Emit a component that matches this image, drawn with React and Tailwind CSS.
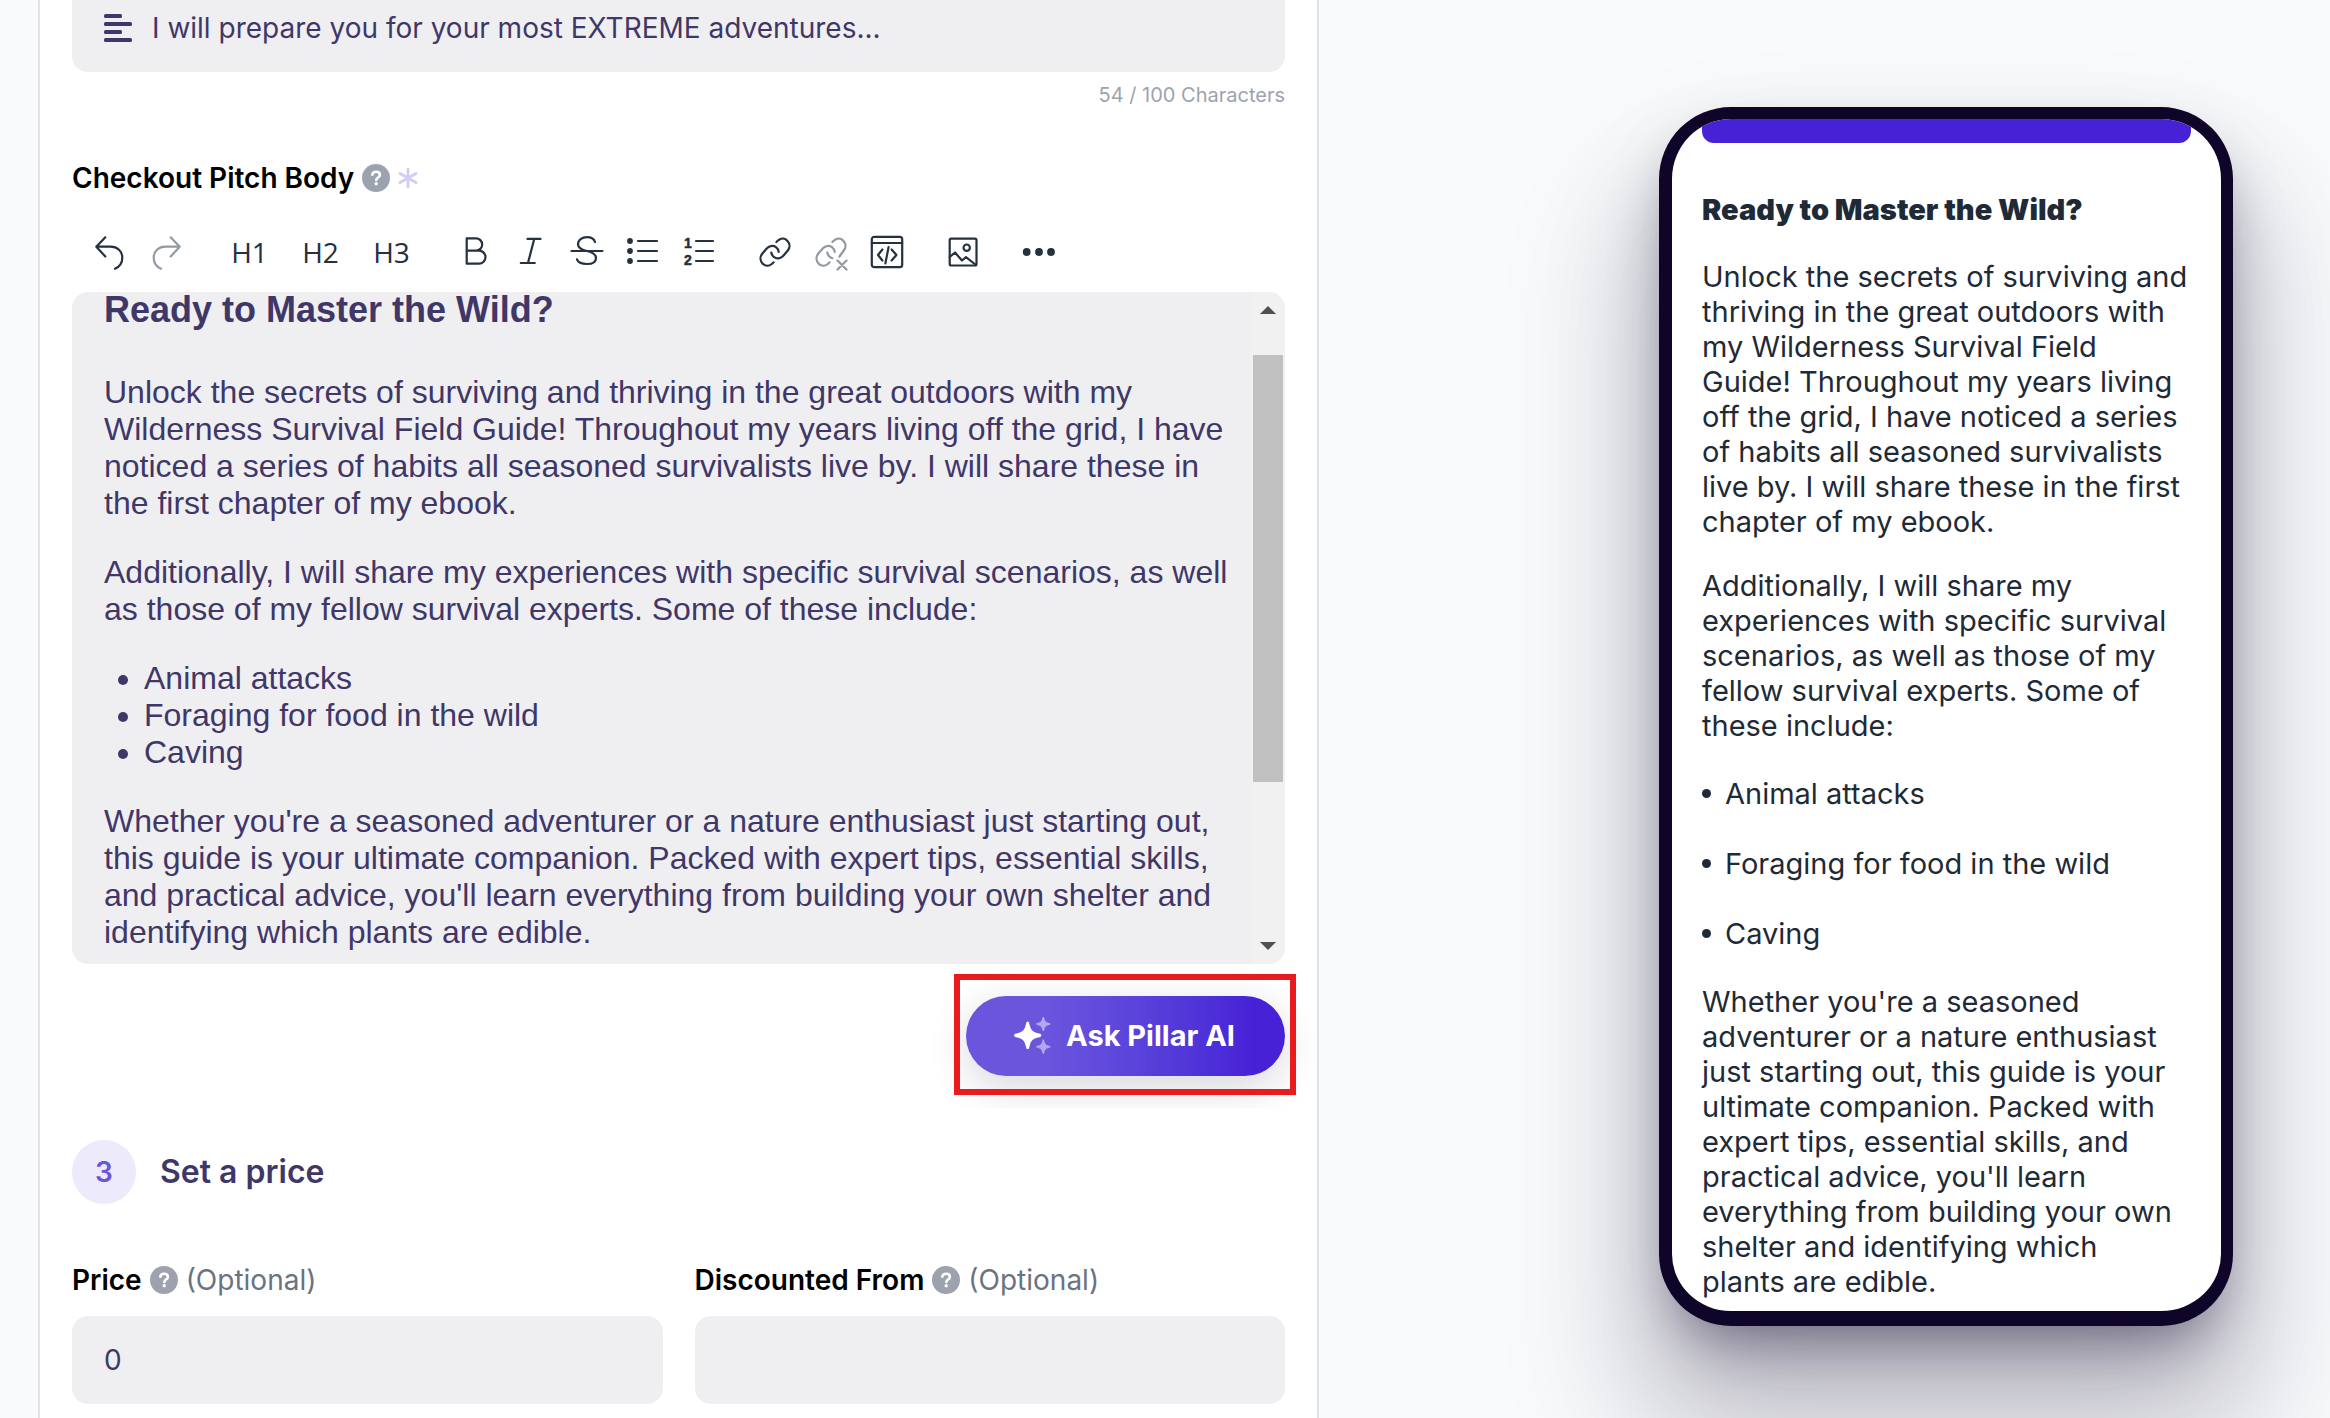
import React, { useState } from 'react';

const pitchParagraphs = [
  'Unlock the secrets of surviving and thriving in the great outdoors with my Wilderness Survival Field Guide! Throughout my years living off the grid, I have noticed a series of habits all seasoned survivalists live by. I will share these in the first chapter of my ebook.',
  'Additionally, I will share my experiences with specific survival scenarios, as well as those of my fellow survival experts. Some of these include:',
];
const pitchTopics = ['Animal attacks', 'Foraging for food in the wild', 'Caving'];
const pitchClosing =
  "Whether you're a seasoned adventurer or a nature enthusiast just starting out, this guide is your ultimate companion. Packed with expert tips, essential skills, and practical advice, you'll learn everything from building your own shelter and identifying which plants\u00a0are edible.";

const Icon = ({ children }) => (
  <svg viewBox="0 0 40 40" className="w-10 h-10" fill="none" stroke="currentColor" strokeWidth="2.2" strokeLinecap="round" strokeLinejoin="round" aria-hidden="true">
    {children}
  </svg>
);

const icons = {
  undo: <path d="M15.3 5.3 6.3 14.7l9 9.7M6.3 14.7H20.5c7 0 11.8 4.6 11.8 10.8 0 5-2.8 9.3-7.3 11.2" />,
  redo: <path d="M24.7 5.3l9 9.4-9 9.7M33.7 14.7H19.5C12.5 14.7 7.7 19.3 7.7 25.5c0 5 2.8 9.3 7.3 11.2" />,
  bold: <path d="M11.7 6.3h9.3a6.2 6.2 0 0 1 0 12.4h-9.3zM11.7 18.7h12.3a6.5 6.5 0 0 1 0 13H11.7z" />,
  italic: <path d="M16.5 6.9h13M9.8 31h14M23.2 6.9 17 31" />,
  strike: (
    <>
      <path d="M4.5 19h31" />
      <path d="M28 10c-1-3-4-4.8-8-4.8-5 0-9 2.6-9 7 0 3.5 3 5.4 9 6.8s9 3.4 9 6.9c0 4-3.6 6.1-9 6.1-5 0-9-1.4-10-4.6" />
    </>
  ),
  bullets: (
    <>
      <path d="M15 9h19M15 19h19M15 29h19" />
      <g fill="currentColor" stroke="none">
        <circle cx="7" cy="9" r="2.9" />
        <circle cx="7" cy="19" r="2.9" />
        <circle cx="7" cy="29" r="2.9" />
      </g>
    </>
  ),
  numbers: (
    <>
      <path d="M17 9h17M17 19h17M17 29h17" />
      <g fill="currentColor" stroke="currentColor" strokeWidth="0.5" fontFamily="Liberation Sans, Arial, sans-serif" fontWeight="700" fontSize="14">
        <text x="5" y="16">1</text>
        <text x="5" y="33">2</text>
      </g>
    </>
  ),
  link: (
    <path d="M16.3 20.5c.6 4 4 6.6 8 5.7 1.6-.3 2.9-1.2 4-2.4l4.5-5.3c5.2-6.6-2.8-15.6-9.6-10.2l-1.8 1.7M23.7 19.8c-.6-4-4-6.6-8-5.7-1.6.3-2.9 1.2-4 2.4l-4.5 5.3c-5.2 6.6 2.8 15.6 9.6 10.2l1.8-1.7" />
  ),
  unlink: (
    <path d="M16.3 20.5c.5 2.9 2.4 5 5 5.7M28.5 24.5l4.3-6c5.2-6.6-2.8-15.6-9.6-10.2l-1.8 1.7M23.7 19.8c-.6-4-4-6.6-8-5.7-1.6.3-2.9 1.2-4 2.4l-4.5 5.3c-5.2 6.6 2.8 15.6 9.6 10.2l1.8-1.7M26.5 28.5l9 9M35.5 28.5l-9 9" />
  ),
  code: (
    <>
      <rect x="4.8" y="4.8" width="30.4" height="30.4" rx="2.5" />
      <path d="M4.8 11h30.4M15.4 17.5 11 23l4.4 5.5M24.6 17.5 29.4 23l-4.8 5.5M21.6 15l-3.2 16.3" />
    </>
  ),
  image: (
    <>
      <rect x="6.7" y="6.7" width="26.8" height="26.8" rx="1.5" />
      <circle cx="23.7" cy="15.7" r="3.2" />
      <path d="M6.7 25l5.3-4.5 7 8 4-3.3 10 7.8" />
    </>
  ),
  more: (
    <g fill="currentColor" stroke="none">
      <circle cx="7.7" cy="20" r="3.9" />
      <circle cx="20" cy="20" r="3.9" />
      <circle cx="32" cy="20" r="3.9" />
    </g>
  ),
};

const toolGroups = [
  [
    { id: 'undo', title: 'Undo' },
    { id: 'redo', title: 'Redo', disabled: true },
  ],
  [
    { id: 'h1', text: 'H1' },
    { id: 'h2', text: 'H2' },
    { id: 'h3', text: 'H3' },
  ],
  [
    { id: 'bold', title: 'Bold' },
    { id: 'italic', title: 'Italic' },
    { id: 'strike', title: 'Strikethrough' },
    { id: 'bullets', title: 'Bulleted list' },
    { id: 'numbers', title: 'Numbered list' },
  ],
  [
    { id: 'link', title: 'Insert link' },
    { id: 'unlink', title: 'Remove link', disabled: true },
    { id: 'code', title: 'View source' },
  ],
  [{ id: 'image', title: 'Insert image' }],
  [{ id: 'more', title: 'More' }],
];

const Toolbar = () => (
  <div role="toolbar" aria-label="Formatting" className="mt-[14px] flex h-20 items-center gap-5 pl-[10px] text-[#25313f]">
    {toolGroups.map((group) => (
      <div key={group[0].id} className="flex items-center">
        {group.map((tool) =>
          tool.text ? (
            <button key={tool.id} type="button" className="h-14 w-[71px] font-['Open_Sans',sans-serif] text-[28px]">
              {tool.text}
            </button>
          ) : (
            <button key={tool.id} type="button" aria-label={tool.title} disabled={tool.disabled} className="flex h-14 w-14 items-center justify-center disabled:text-[#9299a2]">
              <Icon>{icons[tool.id]}</Icon>
            </button>
          )
        )}
      </div>
    ))}
  </div>
);

const HelpIcon = () => (
  <svg viewBox="0 0 28 28" className="h-7 w-7 shrink-0" aria-hidden="true">
    <circle cx="14" cy="14" r="14" fill="#9ca3af" />
    <path d="M10.3 10.8c.3-2 1.8-3 3.8-3 2.2 0 3.8 1.2 3.8 3.1 0 2.6-3.6 2.6-3.6 5" fill="none" stroke="#fff" strokeWidth="2.6" strokeLinecap="round" />
    <circle cx="14.2" cy="19.8" r="1.7" fill="#fff" />
  </svg>
);

const RequiredMark = () => (
  <svg viewBox="0 0 20 20" className="h-5 w-5" stroke="#d3caf6" strokeWidth="2.8" strokeLinecap="round" aria-hidden="true">
    <path d="M10 1.3v17.4M2 5.5l16 9M18 5.5l-16 9" />
  </svg>
);

const PriceField = ({ id, label, value, onChange }) => (
  <div>
    <label htmlFor={id} className="flex h-10 items-center gap-2 text-[28px]">
      <span className="font-semibold text-black">{label}</span>
      <HelpIcon />
      <span className="text-[#6b7280]">(Optional)</span>
    </label>
    <input id={id} type="text" value={value} onChange={(e) => onChange(e.target.value)} className="mt-4 block h-[88px] w-full rounded-2xl bg-[#efeff1] px-8 text-[28px] text-[#3f3768] outline-none" />
  </div>
);

const Editor = () => (
  <div className="flex h-[672px] overflow-hidden rounded-2xl bg-[#efeff1]">
    <div className="min-w-0 flex-1 overflow-hidden pl-8 pr-[18px]">
      <div
        role="textbox"
        aria-multiline="true"
        aria-labelledby="pitch-body-label"
        contentEditable
        suppressContentEditableWarning
        className="font-['Liberation_Sans',Arial,sans-serif] text-[32px] leading-[37px] text-[#3f3768] outline-none"
      >
        <h3 className="mb-[46px] text-[36px] leading-[36px] font-bold">Ready to Master the Wild?</h3>
        {pitchParagraphs.map((text) => (
          <p key={text} className="mb-8">{text}</p>
        ))}
        <ul className="mb-8 list-disc pl-10">
          {pitchTopics.map((topic) => (
            <li key={topic}>{topic}</li>
          ))}
        </ul>
        <p>{pitchClosing}</p>
      </div>
    </div>
    <div className="flex w-[34px] flex-col items-center bg-[#f1f1f1] text-[#505050]" aria-hidden="true">
      <svg viewBox="0 0 16 8" className="mt-[14px] h-2 w-4" fill="currentColor"><path d="M8 0l8 8H0z" /></svg>
      <div className="mt-[41px] h-[427px] w-[30px] bg-[#c1c1c1]" />
      <svg viewBox="0 0 16 8" className="mt-auto mb-[14px] h-2 w-4" fill="currentColor"><path d="M0 0h16L8 8z" /></svg>
    </div>
  </div>
);

const AskButton = () => (
  <div className="mt-8 flex justify-end">
    <div className="relative">
      <button type="button" className="flex h-20 items-center gap-[14px] rounded-full bg-linear-to-r from-[#6b55dd] from-25% to-[#4721d6] to-90% pr-[50px] pl-[46px] text-[29px] font-bold text-white shadow-[0_12px_40px_rgba(20,10,50,0.16)]">
        <svg viewBox="0 0 40 40" className="h-10 w-10" fill="#fff" aria-hidden="true">
          <path d="M15.7 5.5c.9 0 1.3.7 1.6 1.9 1.6 7 3 8.4 10 10 1.2.3 2.1.8 2.1 1.9s-.9 1.6-2.1 1.9c-7 1.6-8.4 3-10 10-.3 1.2-.7 1.9-1.6 1.9s-1.3-.7-1.6-1.9c-1.6-7-3-8.4-10-10C2.9 20.9 2 20.4 2 19.3s.9-1.6 2.1-1.9c7-1.6 8.4-3 10-10 .3-1.2.7-1.9 1.6-1.9z" />
          <path opacity=".48" d="M31.3.9c.6 0 .8.5 1 1.1.9 3.5 1.5 4.1 5 5 .6.2 1.2.4 1.2 1s-.6.8-1.2 1c-3.5.9-4.1 1.5-5 5-.2.6-.4 1.1-1 1.1s-.8-.5-1-1.1c-.9-3.5-1.5-4.1-5-5-.6-.2-1.2-.4-1.2-1s.6-.8 1.2-1c3.5-.9 4.1-1.5 5-5 .2-.6.4-1.1 1-1.1zM31.3 23.6c.6 0 .8.5 1 1.1.9 3.5 1.5 4.1 5 5 .6.2 1.2.4 1.2 1s-.6.8-1.2 1c-3.5.9-4.1 1.5-5 5-.2.6-.4 1.1-1 1.1s-.8-.5-1-1.1c-.9-3.5-1.5-4.1-5-5-.6-.2-1.2-.4-1.2-1s.6-.8 1.2-1c3.5-.9 4.1-1.5 5-5 .2-.6.4-1.1 1-1.1z" />
        </svg>
        Ask Pillar AI
      </button>
      <div className="pointer-events-none absolute -top-[22px] -right-[11px] -bottom-[19px] -left-3 z-10 border-6 border-[#e81c1c]" />
    </div>
  </div>
);

const PhonePreview = () => (
  <div className="h-[1219px] w-[574px] shrink-0 overflow-hidden rounded-[72px] border-t-[12px] border-r-[12px] border-b-[15px] border-l-[13px] border-[#0e0529] bg-white px-[30px] font-['Inter',sans-serif] text-[29px] leading-[35px] text-[#1f2a37] shadow-[0_30px_60px_-20px_rgba(14,5,41,0.5),0_80px_120px_rgba(14,5,41,0.2),0_100px_120px_60px_rgba(14,5,41,0.08)]">
    <div className="h-6 rounded-b-xl bg-[#4721d6]" />
    <h3 className="mt-[49px] font-black">Ready to Master the Wild?</h3>
    <div className="mt-8 flex flex-col gap-[29px]">
      {pitchParagraphs.map((text) => (
        <p key={text}>{text}</p>
      ))}
      <ul className="my-1 flex flex-col gap-[35px]">
        {pitchTopics.map((topic) => (
          <li key={topic} className="flex items-center gap-[14px]">
            <span className="h-[9px] w-[9px] rounded-full bg-[#1f2a37]" />
            {topic}
          </li>
        ))}
      </ul>
      <p>{pitchClosing}</p>
    </div>
  </div>
);

const App = () => {
  const [headline, setHeadline] = useState('I will prepare you for your most EXTREME adventures...');
  const [price, setPrice] = useState('0');
  const [discountedFrom, setDiscountedFrom] = useState('');

  return (
    <div className="flex min-h-screen items-stretch overflow-hidden bg-[#f9fafc] font-['Inter',sans-serif]">
      <main className="relative z-10 ml-[38px] min-w-0 flex-1 border-x-2 border-[#e2e3e8] bg-white px-8 pb-[14px]">
        <div className="-mt-4 flex h-[88px] items-center gap-[20px] rounded-2xl bg-[#efeff1] px-8">
          <svg viewBox="0 0 28 28" className="h-7 w-7" fill="#3f3768" aria-hidden="true">
            <rect width="18" height="4" rx="1.5" />
            <rect y="8" width="28" height="4" rx="1.5" />
            <rect y="16" width="18" height="4" rx="1.5" />
            <rect y="24" width="28" height="4" rx="1.5" />
          </svg>
          <input type="text" aria-label="Checkout headline" value={headline} onChange={(e) => setHeadline(e.target.value)} className="flex-1 bg-transparent text-[28px] text-[#3f3768] outline-none" />
        </div>
        <p className="mt-2 text-right text-[20px] leading-[30px] text-[#9ca3af]">{headline.length} / 100 Characters</p>

        <div className="mt-12 flex h-10 items-center gap-2 text-[28px] font-semibold text-black">
          <span id="pitch-body-label">Checkout Pitch Body</span>
          <HelpIcon />
          <RequiredMark />
        </div>
        <Toolbar />
        <Editor />
        <AskButton />

        <section className="relative mt-8 rounded-3xl bg-white pt-8">
          <div className="flex items-center gap-6">
            <span className="flex h-16 w-16 items-center justify-center rounded-full bg-[#edeafb] text-[28px] font-semibold text-[#6b55dd]">3</span>
            <h2 className="text-[32px] font-semibold text-[#3f3768]">Set a price</h2>
          </div>
          <div className="mt-14 grid grid-cols-2 gap-8">
            <PriceField id="price" label="Price" value={price} onChange={setPrice} />
            <PriceField id="discounted-from" label="Discounted From" value={discountedFrom} onChange={setDiscountedFrom} />
          </div>
        </section>
      </main>

      <aside className="flex w-[1011px] shrink-0 items-start justify-end pt-[107px] pr-[97px]">
        <PhonePreview />
      </aside>
    </div>
  );
};

export default App;
